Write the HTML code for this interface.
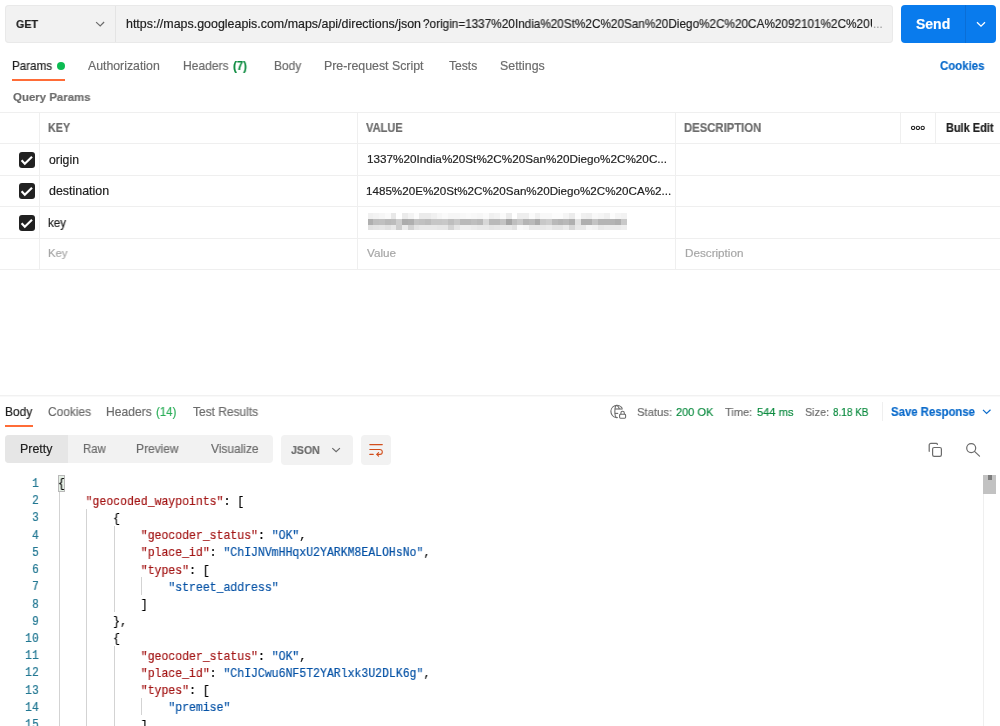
<!DOCTYPE html>
<html><head><meta charset="utf-8"><style>
html,body{-webkit-font-smoothing:antialiased;margin:0;padding:0;background:#fff;width:1000px;height:726px;overflow:hidden;position:relative}
.t{position:absolute;will-change:transform;white-space:pre;font-family:'Liberation Sans', sans-serif;-webkit-text-stroke:0.18px currentColor}
.b{position:absolute}
</style></head><body>
<div class="b" style="left:5px;top:5px;width:888px;height:38px;background:#f2f2f2;border-radius:4px;box-shadow:inset 0 0 0 1px #e9e9e9;"></div>
<div class="b" style="left:115px;top:6px;width:1px;height:36px;background:#e4e4e4;"></div>
<div class="t" id="get" style="left:15.89px;top:19.21px;font-size:11.8px;line-height:11.8px;color:#212121;font-weight:700;font-family:'Liberation Sans', sans-serif;transform:scaleX(0.9079);transform-origin:0 0;">GET</div>
<svg class="b" style="left:95px;top:20px" width="12" height="8" viewBox="0 0 12 8"><path d="M1.1 2.1 L5.2 5.9 L9.1 2.0" fill="none" stroke="#6b6b6b" stroke-width="1.2"/></svg>
<div class="t" id="urlA" style="left:125.74px;top:18.93px;font-size:11.9px;line-height:11.9px;color:#212121;font-weight:400;font-family:'Liberation Sans', sans-serif;transform:scaleX(1.0454);transform-origin:0 0;">https://maps.googleapis.com/maps/api/directions/json</div>
<div class="t" id="urlB" style="left:422.61px;top:18.93px;font-size:11.9px;line-height:11.9px;color:#212121;font-weight:400;font-family:'Liberation Sans', sans-serif;transform:scaleX(0.9884);transform-origin:0 0;">?origin=1337%20India%20St%2C%20San%20Diego%2C%20CA%2092101%2C%20</div>
<div class="b" style="left:870px;top:17px;width:2.2px;height:14px;overflow:hidden"><div class="t" style="left:0;top:2.0px;font-size:11.9px;line-height:11.9px;color:#212121">U</div></div>
<div class="t" id="ell" style="left:872.70px;top:19.27px;font-size:11.5px;line-height:11.5px;color:#a0a0a0;font-weight:400;font-family:'Liberation Sans', sans-serif;">...</div>
<div class="b" style="left:901px;top:5px;width:95px;height:38px;background:#097bed;border-radius:4px;"></div>
<div class="b" style="left:965px;top:5px;width:1px;height:38px;background:#0a6ed6;"></div>
<div class="t" id="send" style="left:916.40px;top:17.15px;font-size:14px;line-height:14px;color:#ffffff;font-weight:700;font-family:'Liberation Sans', sans-serif;">Send</div>
<svg class="b" style="left:976px;top:20px" width="10" height="8" viewBox="0 0 10 8"><path d="M1 2.2 L5 6.1 L9 2.2" fill="none" stroke="#ffffff" stroke-width="1.3"/></svg>
<div class="t" id="params" style="left:12.14px;top:59.76px;font-size:12.1px;line-height:12.1px;color:#212121;font-weight:400;font-family:'Liberation Sans', sans-serif;transform:scaleX(0.9629);transform-origin:0 0;">Params</div>
<div class="b" style="left:57.3px;top:61.6px;width:8px;height:8px;border-radius:50%;background:#0cbb52"></div>
<div class="b" style="left:12.3px;top:79px;width:52.5px;height:2px;background:#ff6c37;"></div>
<div class="t" id="auth" style="left:88.42px;top:59.76px;font-size:12.1px;line-height:12.1px;color:#6b6b6b;font-weight:400;font-family:'Liberation Sans', sans-serif;transform:scaleX(1.0164);transform-origin:0 0;">Authorization</div>
<div class="t" id="headers" style="left:182.99px;top:59.76px;font-size:12.1px;line-height:12.1px;color:#6b6b6b;font-weight:400;font-family:'Liberation Sans', sans-serif;transform:scaleX(0.9929);transform-origin:0 0;">Headers</div>
<div class="t" id="h7" style="left:233.45px;top:59.76px;font-size:12.1px;line-height:12.1px;color:#0a8a3e;font-weight:700;font-family:'Liberation Sans', sans-serif;transform:scaleX(0.9402);transform-origin:0 0;">(7)</div>
<div class="t" id="body" style="left:274.01px;top:59.76px;font-size:12.1px;line-height:12.1px;color:#6b6b6b;font-weight:400;font-family:'Liberation Sans', sans-serif;transform:scaleX(0.9873);transform-origin:0 0;">Body</div>
<div class="t" id="prereq" style="left:324.23px;top:59.76px;font-size:12.1px;line-height:12.1px;color:#6b6b6b;font-weight:400;font-family:'Liberation Sans', sans-serif;transform:scaleX(1.0210);transform-origin:0 0;">Pre-request Script</div>
<div class="t" id="tests" style="left:448.50px;top:59.76px;font-size:12.1px;line-height:12.1px;color:#6b6b6b;font-weight:400;font-family:'Liberation Sans', sans-serif;">Tests</div>
<div class="t" id="settings" style="left:499.85px;top:59.76px;font-size:12.1px;line-height:12.1px;color:#6b6b6b;font-weight:400;font-family:'Liberation Sans', sans-serif;transform:scaleX(1.0229);transform-origin:0 0;">Settings</div>
<div class="t" id="cookies" style="left:940.00px;top:59.56px;font-size:12.1px;line-height:12.1px;color:#0b6bcb;font-weight:700;font-family:'Liberation Sans', sans-serif;transform:scaleX(0.9462);transform-origin:0 0;">Cookies</div>
<div class="t" id="qp" style="left:13.12px;top:91.57px;font-size:11.5px;line-height:11.5px;color:#6b6b6b;font-weight:700;font-family:'Liberation Sans', sans-serif;transform:scaleX(0.9944);transform-origin:0 0;">Query Params</div>
<div class="b" style="left:0px;top:112px;width:1000px;height:1px;background:#efefef;"></div>
<div class="b" style="left:0px;top:143px;width:1000px;height:1px;background:#efefef;"></div>
<div class="b" style="left:0px;top:175px;width:1000px;height:1px;background:#efefef;"></div>
<div class="b" style="left:0px;top:206px;width:1000px;height:1px;background:#efefef;"></div>
<div class="b" style="left:0px;top:238px;width:1000px;height:1px;background:#efefef;"></div>
<div class="b" style="left:0px;top:269px;width:1000px;height:1px;background:#efefef;"></div>
<div class="b" style="left:39px;top:112px;width:1px;height:158px;background:#efefef;"></div>
<div class="b" style="left:357px;top:112px;width:1px;height:158px;background:#efefef;"></div>
<div class="b" style="left:675px;top:112px;width:1px;height:158px;background:#efefef;"></div>
<div class="b" style="left:900px;top:112px;width:1px;height:32px;background:#efefef;"></div>
<div class="b" style="left:935px;top:112px;width:1px;height:32px;background:#efefef;"></div>
<div class="t" id="hkey" style="left:47.73px;top:122.37px;font-size:12.2px;line-height:12.2px;color:#6b6b6b;font-weight:700;font-family:'Liberation Sans', sans-serif;transform:scaleX(0.8831);transform-origin:0 0;">KEY</div>
<div class="t" id="hval" style="left:366.24px;top:122.37px;font-size:12.2px;line-height:12.2px;color:#6b6b6b;font-weight:700;font-family:'Liberation Sans', sans-serif;transform:scaleX(0.9079);transform-origin:0 0;">VALUE</div>
<div class="t" id="hdesc" style="left:684.37px;top:122.37px;font-size:12.2px;line-height:12.2px;color:#6b6b6b;font-weight:700;font-family:'Liberation Sans', sans-serif;transform:scaleX(0.9276);transform-origin:0 0;">DESCRIPTION</div>
<svg class="b" style="left:910px;top:124px" width="16" height="8" viewBox="0 0 16 8"><g fill="none" stroke="#212121" stroke-width="1.05"><circle cx="3.1" cy="3.9" r="1.65"/><circle cx="7.9" cy="3.9" r="1.65"/><circle cx="12.7" cy="3.9" r="1.65"/></g></svg>
<div class="t" id="bulk" style="left:946.21px;top:122.26px;font-size:12.1px;line-height:12.1px;color:#212121;font-weight:700;font-family:'Liberation Sans', sans-serif;transform:scaleX(0.9055);transform-origin:0 0;">Bulk Edit</div>
<svg class="b" style="left:19px;top:151.6px" width="16" height="16" viewBox="0 0 16 16"><rect x="0" y="0" width="16" height="16" rx="3" fill="#212121"/><path d="M2.6 8.3 L5.8 11.7 L13.0 4.7" fill="none" stroke="#fff" stroke-width="2.2"/></svg>
<svg class="b" style="left:19px;top:183.0px" width="16" height="16" viewBox="0 0 16 16"><rect x="0" y="0" width="16" height="16" rx="3" fill="#212121"/><path d="M2.6 8.3 L5.8 11.7 L13.0 4.7" fill="none" stroke="#fff" stroke-width="2.2"/></svg>
<svg class="b" style="left:19px;top:214.6px" width="16" height="16" viewBox="0 0 16 16"><rect x="0" y="0" width="16" height="16" rx="3" fill="#212121"/><path d="M2.6 8.3 L5.8 11.7 L13.0 4.7" fill="none" stroke="#fff" stroke-width="2.2"/></svg>
<div class="t" id="origin" style="left:48.94px;top:153.77px;font-size:12.2px;line-height:12.2px;color:#212121;font-weight:400;font-family:'Liberation Sans', sans-serif;transform:scaleX(1.0042);transform-origin:0 0;">origin</div>
<div class="t" id="v1" style="left:367.05px;top:153.48px;font-size:11.6px;line-height:11.6px;color:#212121;font-weight:400;font-family:'Liberation Sans', sans-serif;transform:scaleX(1.0100);transform-origin:0 0;">1337%20India%20St%2C%20San%20Diego%2C%20C...</div>
<div class="t" id="dest" style="left:48.81px;top:185.27px;font-size:12.2px;line-height:12.2px;color:#212121;font-weight:400;font-family:'Liberation Sans', sans-serif;transform:scaleX(1.0207);transform-origin:0 0;">destination</div>
<div class="t" id="v2" style="left:366.21px;top:185.08px;font-size:11.6px;line-height:11.6px;color:#212121;font-weight:400;font-family:'Liberation Sans', sans-serif;transform:scaleX(1.0032);transform-origin:0 0;">1485%20E%20St%2C%20San%20Diego%2C%20CA%2...</div>
<div class="t" id="key" style="left:48.27px;top:216.57px;font-size:12.2px;line-height:12.2px;color:#212121;font-weight:400;font-family:'Liberation Sans', sans-serif;transform:scaleX(0.9572);transform-origin:0 0;">key</div>
<div class="t" id="phkey" style="left:48.22px;top:246.90px;font-size:11.7px;line-height:11.7px;color:#a6a6a6;font-weight:400;font-family:'Liberation Sans', sans-serif;transform:scaleX(0.9701);transform-origin:0 0;">Key</div>
<div class="t" id="phval" style="left:367.20px;top:246.90px;font-size:11.7px;line-height:11.7px;color:#a6a6a6;font-weight:400;font-family:'Liberation Sans', sans-serif;">Value</div>
<div class="t" id="phdesc" style="left:684.60px;top:246.90px;font-size:11.7px;line-height:11.7px;color:#a6a6a6;font-weight:400;font-family:'Liberation Sans', sans-serif;">Description</div>
<div class="b" style="left:367.6px;top:213.2px;width:262px;height:17.3px;filter:blur(0.45px)"><div style="position:absolute;left:0.00px;top:0px;width:5.81px;height:5.8px;background:rgb(240,240,240)"></div><div style="position:absolute;left:5.76px;top:0px;width:5.81px;height:5.8px;background:rgb(243,243,243)"></div><div style="position:absolute;left:11.52px;top:0px;width:5.81px;height:5.8px;background:rgb(246,246,246)"></div><div style="position:absolute;left:17.28px;top:0px;width:5.81px;height:5.8px;background:rgb(250,250,250)"></div><div style="position:absolute;left:23.04px;top:0px;width:5.81px;height:5.8px;background:rgb(232,232,232)"></div><div style="position:absolute;left:28.80px;top:0px;width:5.81px;height:5.8px;background:rgb(255,255,255)"></div><div style="position:absolute;left:34.56px;top:0px;width:5.81px;height:5.8px;background:rgb(235,235,235)"></div><div style="position:absolute;left:40.32px;top:0px;width:5.81px;height:5.8px;background:rgb(243,243,243)"></div><div style="position:absolute;left:46.08px;top:0px;width:5.81px;height:5.8px;background:rgb(252,252,252)"></div><div style="position:absolute;left:51.84px;top:0px;width:5.81px;height:5.8px;background:rgb(235,235,235)"></div><div style="position:absolute;left:57.60px;top:0px;width:5.81px;height:5.8px;background:rgb(235,235,235)"></div><div style="position:absolute;left:63.36px;top:0px;width:5.81px;height:5.8px;background:rgb(240,240,240)"></div><div style="position:absolute;left:69.12px;top:0px;width:5.81px;height:5.8px;background:rgb(246,246,246)"></div><div style="position:absolute;left:74.88px;top:0px;width:5.81px;height:5.8px;background:rgb(250,250,250)"></div><div style="position:absolute;left:80.64px;top:0px;width:5.81px;height:5.8px;background:rgb(246,246,246)"></div><div style="position:absolute;left:86.40px;top:0px;width:5.81px;height:5.8px;background:rgb(246,246,246)"></div><div style="position:absolute;left:92.16px;top:0px;width:5.81px;height:5.8px;background:rgb(248,248,248)"></div><div style="position:absolute;left:97.92px;top:0px;width:5.81px;height:5.8px;background:rgb(250,250,250)"></div><div style="position:absolute;left:103.68px;top:0px;width:5.81px;height:5.8px;background:rgb(248,248,248)"></div><div style="position:absolute;left:109.44px;top:0px;width:5.81px;height:5.8px;background:rgb(246,246,246)"></div><div style="position:absolute;left:115.20px;top:0px;width:5.81px;height:5.8px;background:rgb(250,250,250)"></div><div style="position:absolute;left:120.96px;top:0px;width:5.81px;height:5.8px;background:rgb(240,240,240)"></div><div style="position:absolute;left:126.72px;top:0px;width:5.81px;height:5.8px;background:rgb(243,243,243)"></div><div style="position:absolute;left:132.48px;top:0px;width:5.81px;height:5.8px;background:rgb(250,250,250)"></div><div style="position:absolute;left:138.24px;top:0px;width:5.81px;height:5.8px;background:rgb(235,235,235)"></div><div style="position:absolute;left:144.00px;top:0px;width:5.81px;height:5.8px;background:rgb(255,255,255)"></div><div style="position:absolute;left:149.76px;top:0px;width:5.81px;height:5.8px;background:rgb(238,238,238)"></div><div style="position:absolute;left:155.52px;top:0px;width:5.81px;height:5.8px;background:rgb(238,238,238)"></div><div style="position:absolute;left:161.28px;top:0px;width:5.81px;height:5.8px;background:rgb(250,250,250)"></div><div style="position:absolute;left:167.04px;top:0px;width:5.81px;height:5.8px;background:rgb(240,240,240)"></div><div style="position:absolute;left:172.80px;top:0px;width:5.81px;height:5.8px;background:rgb(248,248,248)"></div><div style="position:absolute;left:178.56px;top:0px;width:5.81px;height:5.8px;background:rgb(248,248,248)"></div><div style="position:absolute;left:184.32px;top:0px;width:5.81px;height:5.8px;background:rgb(252,252,252)"></div><div style="position:absolute;left:190.08px;top:0px;width:5.81px;height:5.8px;background:rgb(252,252,252)"></div><div style="position:absolute;left:195.84px;top:0px;width:5.81px;height:5.8px;background:rgb(245,245,245)"></div><div style="position:absolute;left:201.60px;top:0px;width:5.81px;height:5.8px;background:rgb(235,235,235)"></div><div style="position:absolute;left:207.36px;top:0px;width:5.81px;height:5.8px;background:rgb(252,252,252)"></div><div style="position:absolute;left:213.12px;top:0px;width:5.81px;height:5.8px;background:rgb(240,240,240)"></div><div style="position:absolute;left:218.88px;top:0px;width:5.81px;height:5.8px;background:rgb(238,238,238)"></div><div style="position:absolute;left:224.64px;top:0px;width:5.81px;height:5.8px;background:rgb(248,248,248)"></div><div style="position:absolute;left:230.40px;top:0px;width:5.81px;height:5.8px;background:rgb(245,245,245)"></div><div style="position:absolute;left:236.16px;top:0px;width:5.81px;height:5.8px;background:rgb(240,240,240)"></div><div style="position:absolute;left:241.92px;top:0px;width:5.81px;height:5.8px;background:rgb(252,252,252)"></div><div style="position:absolute;left:247.68px;top:0px;width:5.81px;height:5.8px;background:rgb(245,245,245)"></div><div style="position:absolute;left:253.44px;top:0px;width:5.81px;height:5.8px;background:rgb(242,242,242)"></div><div style="position:absolute;left:0.00px;top:5.75px;width:5.81px;height:5.8px;background:rgb(175,175,175)"></div><div style="position:absolute;left:5.76px;top:5.75px;width:5.81px;height:5.8px;background:rgb(190,190,190)"></div><div style="position:absolute;left:11.52px;top:5.75px;width:5.81px;height:5.8px;background:rgb(192,192,192)"></div><div style="position:absolute;left:17.28px;top:5.75px;width:5.81px;height:5.8px;background:rgb(185,185,185)"></div><div style="position:absolute;left:23.04px;top:5.75px;width:5.81px;height:5.8px;background:rgb(188,188,188)"></div><div style="position:absolute;left:28.80px;top:5.75px;width:5.81px;height:5.8px;background:rgb(205,205,205)"></div><div style="position:absolute;left:34.56px;top:5.75px;width:5.81px;height:5.8px;background:rgb(172,172,172)"></div><div style="position:absolute;left:40.32px;top:5.75px;width:5.81px;height:5.8px;background:rgb(175,175,175)"></div><div style="position:absolute;left:46.08px;top:5.75px;width:5.81px;height:5.8px;background:rgb(195,195,195)"></div><div style="position:absolute;left:51.84px;top:5.75px;width:5.81px;height:5.8px;background:rgb(192,192,192)"></div><div style="position:absolute;left:57.60px;top:5.75px;width:5.81px;height:5.8px;background:rgb(188,188,188)"></div><div style="position:absolute;left:63.36px;top:5.75px;width:5.81px;height:5.8px;background:rgb(198,198,198)"></div><div style="position:absolute;left:69.12px;top:5.75px;width:5.81px;height:5.8px;background:rgb(198,198,198)"></div><div style="position:absolute;left:74.88px;top:5.75px;width:5.81px;height:5.8px;background:rgb(200,200,200)"></div><div style="position:absolute;left:80.64px;top:5.75px;width:5.81px;height:5.8px;background:rgb(190,190,190)"></div><div style="position:absolute;left:86.40px;top:5.75px;width:5.81px;height:5.8px;background:rgb(200,200,200)"></div><div style="position:absolute;left:92.16px;top:5.75px;width:5.81px;height:5.8px;background:rgb(185,185,185)"></div><div style="position:absolute;left:97.92px;top:5.75px;width:5.81px;height:5.8px;background:rgb(185,185,185)"></div><div style="position:absolute;left:103.68px;top:5.75px;width:5.81px;height:5.8px;background:rgb(190,190,190)"></div><div style="position:absolute;left:109.44px;top:5.75px;width:5.81px;height:5.8px;background:rgb(185,185,185)"></div><div style="position:absolute;left:115.20px;top:5.75px;width:5.81px;height:5.8px;background:rgb(215,215,215)"></div><div style="position:absolute;left:120.96px;top:5.75px;width:5.81px;height:5.8px;background:rgb(185,185,185)"></div><div style="position:absolute;left:126.72px;top:5.75px;width:5.81px;height:5.8px;background:rgb(185,185,185)"></div><div style="position:absolute;left:132.48px;top:5.75px;width:5.81px;height:5.8px;background:rgb(195,195,195)"></div><div style="position:absolute;left:138.24px;top:5.75px;width:5.81px;height:5.8px;background:rgb(165,165,165)"></div><div style="position:absolute;left:144.00px;top:5.75px;width:5.81px;height:5.8px;background:rgb(190,190,190)"></div><div style="position:absolute;left:149.76px;top:5.75px;width:5.81px;height:5.8px;background:rgb(200,200,200)"></div><div style="position:absolute;left:155.52px;top:5.75px;width:5.81px;height:5.8px;background:rgb(180,180,180)"></div><div style="position:absolute;left:161.28px;top:5.75px;width:5.81px;height:5.8px;background:rgb(185,185,185)"></div><div style="position:absolute;left:167.04px;top:5.75px;width:5.81px;height:5.8px;background:rgb(170,170,170)"></div><div style="position:absolute;left:172.80px;top:5.75px;width:5.81px;height:5.8px;background:rgb(200,200,200)"></div><div style="position:absolute;left:178.56px;top:5.75px;width:5.81px;height:5.8px;background:rgb(205,205,205)"></div><div style="position:absolute;left:184.32px;top:5.75px;width:5.81px;height:5.8px;background:rgb(185,185,185)"></div><div style="position:absolute;left:190.08px;top:5.75px;width:5.81px;height:5.8px;background:rgb(180,180,180)"></div><div style="position:absolute;left:195.84px;top:5.75px;width:5.81px;height:5.8px;background:rgb(185,185,185)"></div><div style="position:absolute;left:201.60px;top:5.75px;width:5.81px;height:5.8px;background:rgb(175,175,175)"></div><div style="position:absolute;left:207.36px;top:5.75px;width:5.81px;height:5.8px;background:rgb(225,225,225)"></div><div style="position:absolute;left:213.12px;top:5.75px;width:5.81px;height:5.8px;background:rgb(175,175,175)"></div><div style="position:absolute;left:218.88px;top:5.75px;width:5.81px;height:5.8px;background:rgb(175,175,175)"></div><div style="position:absolute;left:224.64px;top:5.75px;width:5.81px;height:5.8px;background:rgb(195,195,195)"></div><div style="position:absolute;left:230.40px;top:5.75px;width:5.81px;height:5.8px;background:rgb(180,180,180)"></div><div style="position:absolute;left:236.16px;top:5.75px;width:5.81px;height:5.8px;background:rgb(180,180,180)"></div><div style="position:absolute;left:241.92px;top:5.75px;width:5.81px;height:5.8px;background:rgb(180,180,180)"></div><div style="position:absolute;left:247.68px;top:5.75px;width:5.81px;height:5.8px;background:rgb(175,175,175)"></div><div style="position:absolute;left:253.44px;top:5.75px;width:5.81px;height:5.8px;background:rgb(200,200,200)"></div><div style="position:absolute;left:0.00px;top:11.5px;width:5.81px;height:5.8px;background:rgb(225,225,225)"></div><div style="position:absolute;left:5.76px;top:11.5px;width:5.81px;height:5.8px;background:rgb(228,228,228)"></div><div style="position:absolute;left:11.52px;top:11.5px;width:5.81px;height:5.8px;background:rgb(230,230,230)"></div><div style="position:absolute;left:17.28px;top:11.5px;width:5.81px;height:5.8px;background:rgb(225,225,225)"></div><div style="position:absolute;left:23.04px;top:11.5px;width:5.81px;height:5.8px;background:rgb(232,232,232)"></div><div style="position:absolute;left:28.80px;top:11.5px;width:5.81px;height:5.8px;background:rgb(205,205,205)"></div><div style="position:absolute;left:34.56px;top:11.5px;width:5.81px;height:5.8px;background:rgb(235,235,235)"></div><div style="position:absolute;left:40.32px;top:11.5px;width:5.81px;height:5.8px;background:rgb(210,210,210)"></div><div style="position:absolute;left:46.08px;top:11.5px;width:5.81px;height:5.8px;background:rgb(228,228,228)"></div><div style="position:absolute;left:51.84px;top:11.5px;width:5.81px;height:5.8px;background:rgb(232,232,232)"></div><div style="position:absolute;left:57.60px;top:11.5px;width:5.81px;height:5.8px;background:rgb(232,232,232)"></div><div style="position:absolute;left:63.36px;top:11.5px;width:5.81px;height:5.8px;background:rgb(232,232,232)"></div><div style="position:absolute;left:69.12px;top:11.5px;width:5.81px;height:5.8px;background:rgb(230,230,230)"></div><div style="position:absolute;left:74.88px;top:11.5px;width:5.81px;height:5.8px;background:rgb(230,230,230)"></div><div style="position:absolute;left:80.64px;top:11.5px;width:5.81px;height:5.8px;background:rgb(212,212,212)"></div><div style="position:absolute;left:86.40px;top:11.5px;width:5.81px;height:5.8px;background:rgb(230,230,230)"></div><div style="position:absolute;left:92.16px;top:11.5px;width:5.81px;height:5.8px;background:rgb(238,238,238)"></div><div style="position:absolute;left:97.92px;top:11.5px;width:5.81px;height:5.8px;background:rgb(238,238,238)"></div><div style="position:absolute;left:103.68px;top:11.5px;width:5.81px;height:5.8px;background:rgb(235,235,235)"></div><div style="position:absolute;left:109.44px;top:11.5px;width:5.81px;height:5.8px;background:rgb(232,232,232)"></div><div style="position:absolute;left:115.20px;top:11.5px;width:5.81px;height:5.8px;background:rgb(232,232,232)"></div><div style="position:absolute;left:120.96px;top:11.5px;width:5.81px;height:5.8px;background:rgb(228,228,228)"></div><div style="position:absolute;left:126.72px;top:11.5px;width:5.81px;height:5.8px;background:rgb(230,230,230)"></div><div style="position:absolute;left:132.48px;top:11.5px;width:5.81px;height:5.8px;background:rgb(232,232,232)"></div><div style="position:absolute;left:138.24px;top:11.5px;width:5.81px;height:5.8px;background:rgb(232,232,232)"></div><div style="position:absolute;left:144.00px;top:11.5px;width:5.81px;height:5.8px;background:rgb(225,225,225)"></div><div style="position:absolute;left:149.76px;top:11.5px;width:5.81px;height:5.8px;background:rgb(248,248,248)"></div><div style="position:absolute;left:155.52px;top:11.5px;width:5.81px;height:5.8px;background:rgb(245,245,245)"></div><div style="position:absolute;left:161.28px;top:11.5px;width:5.81px;height:5.8px;background:rgb(232,232,232)"></div><div style="position:absolute;left:167.04px;top:11.5px;width:5.81px;height:5.8px;background:rgb(232,232,232)"></div><div style="position:absolute;left:172.80px;top:11.5px;width:5.81px;height:5.8px;background:rgb(232,232,232)"></div><div style="position:absolute;left:178.56px;top:11.5px;width:5.81px;height:5.8px;background:rgb(235,235,235)"></div><div style="position:absolute;left:184.32px;top:11.5px;width:5.81px;height:5.8px;background:rgb(228,228,228)"></div><div style="position:absolute;left:190.08px;top:11.5px;width:5.81px;height:5.8px;background:rgb(228,228,228)"></div><div style="position:absolute;left:195.84px;top:11.5px;width:5.81px;height:5.8px;background:rgb(235,235,235)"></div><div style="position:absolute;left:201.60px;top:11.5px;width:5.81px;height:5.8px;background:rgb(215,215,215)"></div><div style="position:absolute;left:207.36px;top:11.5px;width:5.81px;height:5.8px;background:rgb(232,232,232)"></div><div style="position:absolute;left:213.12px;top:11.5px;width:5.81px;height:5.8px;background:rgb(232,232,232)"></div><div style="position:absolute;left:218.88px;top:11.5px;width:5.81px;height:5.8px;background:rgb(245,245,245)"></div><div style="position:absolute;left:224.64px;top:11.5px;width:5.81px;height:5.8px;background:rgb(242,242,242)"></div><div style="position:absolute;left:230.40px;top:11.5px;width:5.81px;height:5.8px;background:rgb(232,232,232)"></div><div style="position:absolute;left:236.16px;top:11.5px;width:5.81px;height:5.8px;background:rgb(235,235,235)"></div><div style="position:absolute;left:241.92px;top:11.5px;width:5.81px;height:5.8px;background:rgb(235,235,235)"></div><div style="position:absolute;left:247.68px;top:11.5px;width:5.81px;height:5.8px;background:rgb(235,235,235)"></div><div style="position:absolute;left:253.44px;top:11.5px;width:5.81px;height:5.8px;background:rgb(238,238,238)"></div></div>
<div class="b" style="left:0px;top:395px;width:1000px;height:1px;background:#f1f1f1;"></div>
<div class="b" style="left:0px;top:396px;width:1000px;height:1px;background:#f9f9f9;"></div>
<div class="t" id="rbody" style="left:4.71px;top:406.06px;font-size:12.1px;line-height:12.1px;color:#212121;font-weight:400;font-family:'Liberation Sans', sans-serif;transform:scaleX(0.9884);transform-origin:0 0;">Body</div>
<div class="b" style="left:5px;top:425px;width:27.5px;height:2px;background:#ff6c37;"></div>
<div class="t" id="rcookies" style="left:47.85px;top:406.06px;font-size:12.1px;line-height:12.1px;color:#6b6b6b;font-weight:400;font-family:'Liberation Sans', sans-serif;transform:scaleX(0.9827);transform-origin:0 0;">Cookies</div>
<div class="t" id="rheaders" style="left:106.09px;top:406.06px;font-size:12.1px;line-height:12.1px;color:#6b6b6b;font-weight:400;font-family:'Liberation Sans', sans-serif;transform:scaleX(0.9965);transform-origin:0 0;">Headers</div>
<div class="t" id="r14" style="left:156.34px;top:406.06px;font-size:12.1px;line-height:12.1px;color:#2aad58;font-weight:400;font-family:'Liberation Sans', sans-serif;transform:scaleX(0.9449);transform-origin:0 0;">(14)</div>
<div class="t" id="rtests" style="left:193.00px;top:406.06px;font-size:12.1px;line-height:12.1px;color:#6b6b6b;font-weight:400;font-family:'Liberation Sans', sans-serif;transform:scaleX(0.9892);transform-origin:0 0;">Test Results</div>
<svg class="b" style="left:604px;top:400px" width="28" height="24" viewBox="0 0 28 24"><g fill="none" stroke="#6b6b6b" stroke-width="1.1"><path d="M18.4 8.6 A6.1 6.1 0 1 0 13.8 17.55"/><path d="M12.95 5.4 A2.1 6.1 0 0 0 12.95 17.6"/><path d="M12.95 5.4 C14.3 6.4 15.1 7.8 15.4 9"/><path d="M10.85 9 H18.6"/><path d="M10.85 13.4 H14.2"/><rect x="15.6" y="14.3" width="6" height="3.9" rx="0.9"/><path d="M16.9 14.3 V12.9 A1.7 1.7 0 0 1 20.3 12.9 V14.3"/></g></svg>
<div class="t" id="st1" style="left:636.76px;top:407.11px;font-size:11.8px;line-height:11.8px;color:#6b6b6b;font-weight:400;font-family:'Liberation Sans', sans-serif;transform:scaleX(0.9559);transform-origin:0 0;">Status:</div>
<div class="t" id="st2" style="left:675.59px;top:407.11px;font-size:11.8px;line-height:11.8px;color:#0a8a3e;font-weight:400;font-family:'Liberation Sans', sans-serif;transform:scaleX(0.9311);transform-origin:0 0;">200 OK</div>
<div class="t" id="st3" style="left:725.37px;top:407.11px;font-size:11.8px;line-height:11.8px;color:#6b6b6b;font-weight:400;font-family:'Liberation Sans', sans-serif;transform:scaleX(0.9363);transform-origin:0 0;">Time:</div>
<div class="t" id="st4" style="left:756.79px;top:407.11px;font-size:11.8px;line-height:11.8px;color:#0a8a3e;font-weight:400;font-family:'Liberation Sans', sans-serif;transform:scaleX(0.9447);transform-origin:0 0;">544 ms</div>
<div class="t" id="st5" style="left:804.56px;top:407.11px;font-size:11.8px;line-height:11.8px;color:#6b6b6b;font-weight:400;font-family:'Liberation Sans', sans-serif;transform:scaleX(0.9155);transform-origin:0 0;">Size:</div>
<div class="t" id="st6" style="left:833.08px;top:407.11px;font-size:11.8px;line-height:11.8px;color:#0a8a3e;font-weight:400;font-family:'Liberation Sans', sans-serif;transform:scaleX(0.8442);transform-origin:0 0;">8.18 KB</div>
<div class="b" style="left:881.5px;top:402px;width:1px;height:19px;background:#efefef;"></div>
<div class="t" id="save" style="left:890.92px;top:405.57px;font-size:12.2px;line-height:12.2px;color:#0b6bcb;font-weight:700;font-family:'Liberation Sans', sans-serif;transform:scaleX(0.9321);transform-origin:0 0;">Save Response</div>
<svg class="b" style="left:982px;top:408px" width="10" height="7" viewBox="0 0 10 7"><path d="M1 1.9 L4.6 5.4 L8.5 1.8" fill="none" stroke="#0b6bcb" stroke-width="1.2"/></svg>
<div class="b" style="left:5px;top:435px;width:268px;height:28px;background:#f2f2f2;border-radius:4px;"></div>
<div class="b" style="left:5px;top:435px;width:63px;height:28px;background:#e6e6e6;border-radius:4px 0 0 4px;"></div>
<div class="t" id="pretty" style="left:19.57px;top:443.17px;font-size:12.2px;line-height:12.2px;color:#212121;font-weight:400;font-family:'Liberation Sans', sans-serif;transform:scaleX(1.0162);transform-origin:0 0;">Pretty</div>
<div class="t" id="raw" style="left:83.04px;top:443.17px;font-size:12.2px;line-height:12.2px;color:#6b6b6b;font-weight:400;font-family:'Liberation Sans', sans-serif;transform:scaleX(0.9354);transform-origin:0 0;">Raw</div>
<div class="t" id="preview" style="left:136.30px;top:443.17px;font-size:12.2px;line-height:12.2px;color:#6b6b6b;font-weight:400;font-family:'Liberation Sans', sans-serif;transform:scaleX(0.9816);transform-origin:0 0;">Preview</div>
<div class="t" id="visualize" style="left:211.16px;top:443.17px;font-size:12.2px;line-height:12.2px;color:#6b6b6b;font-weight:400;font-family:'Liberation Sans', sans-serif;transform:scaleX(0.9799);transform-origin:0 0;">Visualize</div>
<div class="b" style="left:281px;top:435px;width:72px;height:30px;background:#f2f2f2;border-radius:4px;"></div>
<div class="t" id="json" style="left:291.01px;top:445.05px;font-size:11.4px;line-height:11.4px;color:#6b6b6b;font-weight:700;font-family:'Liberation Sans', sans-serif;transform:scaleX(0.9281);transform-origin:0 0;">JSON</div>
<svg class="b" style="left:331px;top:446px" width="11" height="8" viewBox="0 0 11 8"><path d="M1.3 2.1 L5.1 5.7 L8.9 2.1" fill="none" stroke="#6b6b6b" stroke-width="1.2"/></svg>
<div class="b" style="left:361.3px;top:434.5px;width:30px;height:30.8px;background:#f2f2f2;border-radius:4px;"></div>
<svg class="b" style="left:361.3px;top:434.5px" width="30" height="31" viewBox="0 0 30 31"><g fill="none" stroke="#d24e1c" stroke-width="1.1" stroke-linecap="round" stroke-linejoin="round"><path d="M8.8 9.6 H21.3"/><path d="M8.8 14.5 H18.85 A2.45 2.45 0 0 1 18.85 19.4 H16"/><path d="M17.6 17.7 L15.8 19.4 L17.6 21.1"/><path d="M8.8 19.4 H12.2"/></g></svg>
<svg class="b" style="left:925px;top:440px" width="20" height="20" viewBox="0 0 20 20"><g fill="none" stroke="#6b6b6b" stroke-width="1.2" stroke-linecap="round"><path d="M4.2 11.3 V5.1 A1.7 1.7 0 0 1 5.9 3.4 H11.3 A1.1 1.1 0 0 1 12.4 4.3"/><rect x="7.6" y="7.5" width="8.8" height="8.8" rx="1.6"/></g></svg>
<svg class="b" style="left:962px;top:440px" width="20" height="20" viewBox="0 0 20 20"><g fill="none" stroke="#6b6b6b" stroke-width="1.2"><circle cx="9.2" cy="8.1" r="4.5"/><path d="M12.5 11.4 L17.5 16.1" stroke-linecap="round"/></g></svg>
<div class="b" style="left:982.5px;top:475px;width:1px;height:251px;background:#efefef;"></div>
<div class="b" style="left:983px;top:475px;width:13px;height:18.6px;background:#c2c2c2;"></div>
<div class="b" style="left:988px;top:475px;width:4px;height:5px;background:#7d7d7d;"></div>
<div class="b" style="left:59.00px;top:491.60px;width:1px;height:234.40px;background:#d3d3d3"></div>
<div class="b" style="left:86.00px;top:508.54px;width:1px;height:217.46px;background:#d3d3d3"></div>
<div class="b" style="left:114.00px;top:525.76px;width:1px;height:86.10px;background:#d3d3d3"></div>
<div class="b" style="left:114.00px;top:646.30px;width:1px;height:79.70px;background:#d3d3d3"></div>
<div class="b" style="left:141.00px;top:577.42px;width:1px;height:17.22px;background:#d3d3d3"></div>
<div class="b" style="left:141.00px;top:697.96px;width:1px;height:17.22px;background:#d3d3d3"></div>
<div class="b" style="left:58.3px;top:474.8px;width:6.5px;height:16.8px;background:rgba(0,100,0,0.1);box-shadow:inset 0 0 0 1px #b9b9b9;"></div>
<div class="t" id="ln1" style="left:32.00px;top:477.03px;font-size:13.2px;line-height:13.2px;color:#237893;font-weight:400;font-family:'Liberation Mono', monospace;transform:scaleX(0.8712);transform-origin:0 0;-webkit-text-stroke:0.2px currentColor;">1</div>
<div class="t" id="code1" style="left:57.80px;top:477.43px;font-size:13.2px;line-height:13.2px;color:#000000;font-weight:400;font-family:'Liberation Mono', monospace;transform:scaleX(0.8712);transform-origin:0 0;-webkit-text-stroke:0.2px currentColor;"><span style="color:#000000">{</span></div>
<div class="t" id="ln2" style="left:32.00px;top:494.25px;font-size:13.2px;line-height:13.2px;color:#237893;font-weight:400;font-family:'Liberation Mono', monospace;transform:scaleX(0.8712);transform-origin:0 0;-webkit-text-stroke:0.2px currentColor;">2</div>
<div class="t" id="code2" style="left:57.80px;top:494.65px;font-size:13.2px;line-height:13.2px;color:#000000;font-weight:400;font-family:'Liberation Mono', monospace;transform:scaleX(0.8712);transform-origin:0 0;-webkit-text-stroke:0.2px currentColor;"><span style="color:#000000">    </span><span style="color:#a31515">"geocoded_waypoints"</span><span style="color:#000000">: [</span></div>
<div class="t" id="ln3" style="left:32.00px;top:511.47px;font-size:13.2px;line-height:13.2px;color:#237893;font-weight:400;font-family:'Liberation Mono', monospace;transform:scaleX(0.8712);transform-origin:0 0;-webkit-text-stroke:0.2px currentColor;">3</div>
<div class="t" id="code3" style="left:57.80px;top:511.87px;font-size:13.2px;line-height:13.2px;color:#000000;font-weight:400;font-family:'Liberation Mono', monospace;transform:scaleX(0.8712);transform-origin:0 0;-webkit-text-stroke:0.2px currentColor;"><span style="color:#000000">        {</span></div>
<div class="t" id="ln4" style="left:32.00px;top:528.69px;font-size:13.2px;line-height:13.2px;color:#237893;font-weight:400;font-family:'Liberation Mono', monospace;transform:scaleX(0.8712);transform-origin:0 0;-webkit-text-stroke:0.2px currentColor;">4</div>
<div class="t" id="code4" style="left:57.80px;top:529.09px;font-size:13.2px;line-height:13.2px;color:#000000;font-weight:400;font-family:'Liberation Mono', monospace;transform:scaleX(0.8712);transform-origin:0 0;-webkit-text-stroke:0.2px currentColor;"><span style="color:#000000">            </span><span style="color:#a31515">"geocoder_status"</span><span style="color:#000000">: </span><span style="color:#0451a5">"OK"</span><span style="color:#000000">,</span></div>
<div class="t" id="ln5" style="left:32.00px;top:545.91px;font-size:13.2px;line-height:13.2px;color:#237893;font-weight:400;font-family:'Liberation Mono', monospace;transform:scaleX(0.8712);transform-origin:0 0;-webkit-text-stroke:0.2px currentColor;">5</div>
<div class="t" id="code5" style="left:57.80px;top:546.31px;font-size:13.2px;line-height:13.2px;color:#000000;font-weight:400;font-family:'Liberation Mono', monospace;transform:scaleX(0.8712);transform-origin:0 0;-webkit-text-stroke:0.2px currentColor;"><span style="color:#000000">            </span><span style="color:#a31515">"place_id"</span><span style="color:#000000">: </span><span style="color:#0451a5">"ChIJNVmHHqxU2YARKM8EALOHsNo"</span><span style="color:#000000">,</span></div>
<div class="t" id="ln6" style="left:32.00px;top:563.13px;font-size:13.2px;line-height:13.2px;color:#237893;font-weight:400;font-family:'Liberation Mono', monospace;transform:scaleX(0.8712);transform-origin:0 0;-webkit-text-stroke:0.2px currentColor;">6</div>
<div class="t" id="code6" style="left:57.80px;top:563.53px;font-size:13.2px;line-height:13.2px;color:#000000;font-weight:400;font-family:'Liberation Mono', monospace;transform:scaleX(0.8712);transform-origin:0 0;-webkit-text-stroke:0.2px currentColor;"><span style="color:#000000">            </span><span style="color:#a31515">"types"</span><span style="color:#000000">: [</span></div>
<div class="t" id="ln7" style="left:32.00px;top:580.35px;font-size:13.2px;line-height:13.2px;color:#237893;font-weight:400;font-family:'Liberation Mono', monospace;transform:scaleX(0.8712);transform-origin:0 0;-webkit-text-stroke:0.2px currentColor;">7</div>
<div class="t" id="code7" style="left:57.80px;top:580.75px;font-size:13.2px;line-height:13.2px;color:#000000;font-weight:400;font-family:'Liberation Mono', monospace;transform:scaleX(0.8712);transform-origin:0 0;-webkit-text-stroke:0.2px currentColor;"><span style="color:#000000">                </span><span style="color:#0451a5">"street_address"</span></div>
<div class="t" id="ln8" style="left:32.00px;top:597.57px;font-size:13.2px;line-height:13.2px;color:#237893;font-weight:400;font-family:'Liberation Mono', monospace;transform:scaleX(0.8712);transform-origin:0 0;-webkit-text-stroke:0.2px currentColor;">8</div>
<div class="t" id="code8" style="left:57.80px;top:597.97px;font-size:13.2px;line-height:13.2px;color:#000000;font-weight:400;font-family:'Liberation Mono', monospace;transform:scaleX(0.8712);transform-origin:0 0;-webkit-text-stroke:0.2px currentColor;"><span style="color:#000000">            ]</span></div>
<div class="t" id="ln9" style="left:32.00px;top:614.79px;font-size:13.2px;line-height:13.2px;color:#237893;font-weight:400;font-family:'Liberation Mono', monospace;transform:scaleX(0.8712);transform-origin:0 0;-webkit-text-stroke:0.2px currentColor;">9</div>
<div class="t" id="code9" style="left:57.80px;top:615.19px;font-size:13.2px;line-height:13.2px;color:#000000;font-weight:400;font-family:'Liberation Mono', monospace;transform:scaleX(0.8712);transform-origin:0 0;-webkit-text-stroke:0.2px currentColor;"><span style="color:#000000">        },</span></div>
<div class="t" id="ln10" style="left:25.10px;top:632.01px;font-size:13.2px;line-height:13.2px;color:#237893;font-weight:400;font-family:'Liberation Mono', monospace;transform:scaleX(0.8712);transform-origin:0 0;-webkit-text-stroke:0.2px currentColor;">10</div>
<div class="t" id="code10" style="left:57.80px;top:632.41px;font-size:13.2px;line-height:13.2px;color:#000000;font-weight:400;font-family:'Liberation Mono', monospace;transform:scaleX(0.8712);transform-origin:0 0;-webkit-text-stroke:0.2px currentColor;"><span style="color:#000000">        {</span></div>
<div class="t" id="ln11" style="left:25.10px;top:649.23px;font-size:13.2px;line-height:13.2px;color:#237893;font-weight:400;font-family:'Liberation Mono', monospace;transform:scaleX(0.8712);transform-origin:0 0;-webkit-text-stroke:0.2px currentColor;">11</div>
<div class="t" id="code11" style="left:57.80px;top:649.63px;font-size:13.2px;line-height:13.2px;color:#000000;font-weight:400;font-family:'Liberation Mono', monospace;transform:scaleX(0.8712);transform-origin:0 0;-webkit-text-stroke:0.2px currentColor;"><span style="color:#000000">            </span><span style="color:#a31515">"geocoder_status"</span><span style="color:#000000">: </span><span style="color:#0451a5">"OK"</span><span style="color:#000000">,</span></div>
<div class="t" id="ln12" style="left:25.10px;top:666.45px;font-size:13.2px;line-height:13.2px;color:#237893;font-weight:400;font-family:'Liberation Mono', monospace;transform:scaleX(0.8712);transform-origin:0 0;-webkit-text-stroke:0.2px currentColor;">12</div>
<div class="t" id="code12" style="left:57.80px;top:666.85px;font-size:13.2px;line-height:13.2px;color:#000000;font-weight:400;font-family:'Liberation Mono', monospace;transform:scaleX(0.8712);transform-origin:0 0;-webkit-text-stroke:0.2px currentColor;"><span style="color:#000000">            </span><span style="color:#a31515">"place_id"</span><span style="color:#000000">: </span><span style="color:#0451a5">"ChIJCwu6NF5T2YARlxk3U2DLK6g"</span><span style="color:#000000">,</span></div>
<div class="t" id="ln13" style="left:25.10px;top:683.67px;font-size:13.2px;line-height:13.2px;color:#237893;font-weight:400;font-family:'Liberation Mono', monospace;transform:scaleX(0.8712);transform-origin:0 0;-webkit-text-stroke:0.2px currentColor;">13</div>
<div class="t" id="code13" style="left:57.80px;top:684.07px;font-size:13.2px;line-height:13.2px;color:#000000;font-weight:400;font-family:'Liberation Mono', monospace;transform:scaleX(0.8712);transform-origin:0 0;-webkit-text-stroke:0.2px currentColor;"><span style="color:#000000">            </span><span style="color:#a31515">"types"</span><span style="color:#000000">: [</span></div>
<div class="t" id="ln14" style="left:25.10px;top:700.89px;font-size:13.2px;line-height:13.2px;color:#237893;font-weight:400;font-family:'Liberation Mono', monospace;transform:scaleX(0.8712);transform-origin:0 0;-webkit-text-stroke:0.2px currentColor;">14</div>
<div class="t" id="code14" style="left:57.80px;top:701.29px;font-size:13.2px;line-height:13.2px;color:#000000;font-weight:400;font-family:'Liberation Mono', monospace;transform:scaleX(0.8712);transform-origin:0 0;-webkit-text-stroke:0.2px currentColor;"><span style="color:#000000">                </span><span style="color:#0451a5">"premise"</span></div>
<div class="t" id="ln15" style="left:25.10px;top:718.11px;font-size:13.2px;line-height:13.2px;color:#237893;font-weight:400;font-family:'Liberation Mono', monospace;transform:scaleX(0.8712);transform-origin:0 0;-webkit-text-stroke:0.2px currentColor;">15</div>
<div class="t" id="code15" style="left:57.80px;top:718.51px;font-size:13.2px;line-height:13.2px;color:#000000;font-weight:400;font-family:'Liberation Mono', monospace;transform:scaleX(0.8712);transform-origin:0 0;-webkit-text-stroke:0.2px currentColor;"><span style="color:#000000">            ]</span></div>
</body></html>
